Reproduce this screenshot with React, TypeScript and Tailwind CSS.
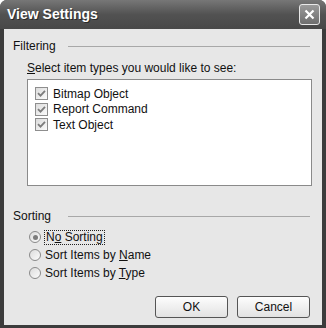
const font = { fontFamily: '"Liberation Sans", Arial, sans-serif' };

function Check() {
  return (
    <span className="flex size-[13px] items-center justify-center border border-[#8e8e8e] bg-gradient-to-br from-[#dcdcdc] to-[#fbfbfb]">
      <svg width="9" height="9" viewBox="0 0 9 9">
        <path d="M1 4.2 L3.5 6.7 L8 1.8" fill="none" stroke="#7c7c7c" strokeWidth="1.8" />
      </svg>
    </span>
  );
}

function Radio({ on }: { on?: boolean }) {
  return (
    <span className="flex size-[12px] items-center justify-center rounded-full border border-[#8a8a8a] bg-gradient-to-br from-[#dcdcdc] to-[#fbfbfb]">
      {on && <span className="size-[5px] rounded-full bg-[#7c7c7c]" />}
    </span>
  );
}

function GroupHeader({ label }: { label: string }) {
  return (
    <div className="flex items-center">
      <span className="w-[55px] text-[12px] leading-[14px] text-[#111]">{label}</span>
      <span className="h-px flex-1 bg-[#a8a8a8]" />
    </div>
  );
}

export default function App() {
  const items = ["Bitmap Object", "Report Command", "Text Object"];

  return (
    <div className="h-[328px] w-[326px] bg-white" style={font}>
      <div className="flex h-full flex-col rounded-t-[7px] bg-[#3c3c3c]">
        {/* title bar */}
        <div className="flex h-[29px] items-center justify-between rounded-t-[7px] bg-gradient-to-b from-[#777777] via-[#525252] to-[#484848] pl-[7px] pr-[6px]">
          <span className="text-[14px] font-bold text-white [text-shadow:1px_1px_0_#2a2a2a]">
            View Settings
          </span>
          <span className="flex size-[21px] items-center justify-center rounded-[3px] border border-[#e8e8e8] bg-gradient-to-b from-[#9a9a9a] to-[#6e6e6e]">
            <svg width="11" height="11" viewBox="0 0 11 11">
              <path d="M1.5 1.5 L9.5 9.5 M9.5 1.5 L1.5 9.5" stroke="white" strokeWidth="2.2" />
            </svg>
          </span>
        </div>

        {/* body */}
        <div className="mx-[4px] mb-[3px] flex flex-1 flex-col bg-[#e7e7e7] pl-[9px] pr-[12px] pt-[10px] text-[12px] text-[#111]">
          <GroupHeader label="Filtering" />

          <div className="pl-[14px] pt-[8px]">
            <div className="leading-[14px]">
              <span className="underline">S</span>elect item types you would like to see:
            </div>
            <div className="mt-[4px] h-[107px] w-[285px] border border-[#8a8a8a] bg-white pl-[7px] pt-[6px]">
              {items.map((item) => (
                <div key={item} className="flex h-[15.5px] items-center gap-[5px]">
                  <Check />
                  <span className="leading-[14px]">{item}</span>
                </div>
              ))}
            </div>
          </div>

          <div className="pt-[23px]">
            <GroupHeader label="Sorting" />
          </div>

          <div className="flex flex-col pl-[16px] pt-[5px]">
            <div className="flex h-[18px] items-center gap-[3px]">
              <Radio on />
              <span className="border border-dotted border-[#222] px-px leading-[13px]">
                N<span className="underline">o</span> Sorting
              </span>
            </div>
            <div className="flex h-[18px] items-center gap-[4px]">
              <Radio />
              <span className="leading-[14px]">
                Sort Items by <span className="underline">N</span>ame
              </span>
            </div>
            <div className="flex h-[18px] items-center gap-[4px]">
              <Radio />
              <span className="leading-[14px]">
                Sort Items by <span className="underline">T</span>ype
              </span>
            </div>
          </div>

          <div className="mt-auto flex justify-end gap-[9px] pb-[7px]">
            <button className="h-[22px] w-[73px] rounded-[3px] border border-[#555] bg-gradient-to-b from-[#fdfdfd] to-[#e2e2e2] text-[12px] text-[#111]">
              OK
            </button>
            <button className="h-[22px] w-[73px] rounded-[3px] border border-[#555] bg-gradient-to-b from-[#fdfdfd] to-[#e2e2e2] text-[12px] text-[#111]">
              Cancel
            </button>
          </div>
        </div>
      </div>
    </div>
  );
}
